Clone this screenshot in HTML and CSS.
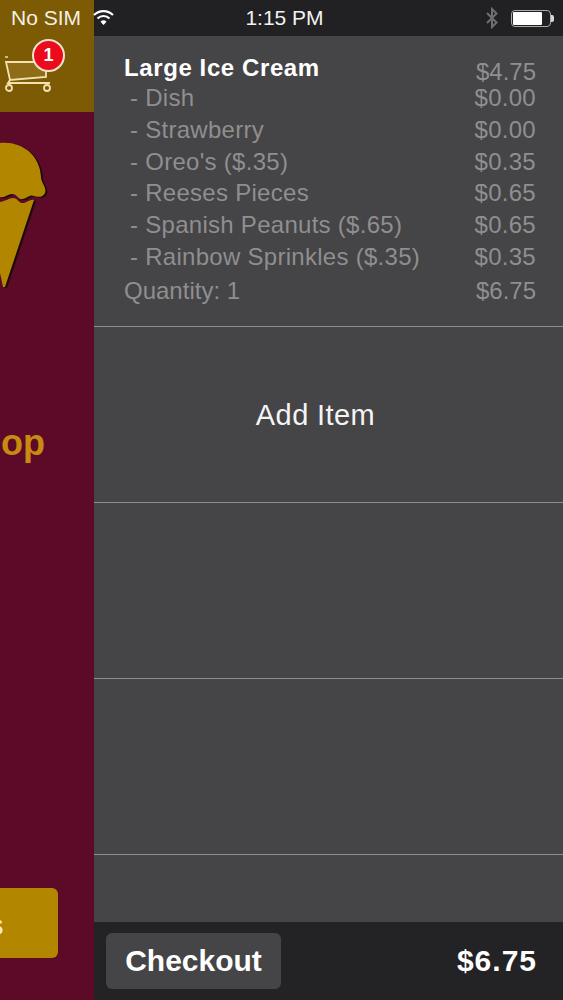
FILE: index.html
```html
<!DOCTYPE html>
<html lang="en">
<head>
  <meta charset="UTF-8">
  <meta name="viewport" content="width=device-width, initial-scale=1.0">
  <title>Cart</title>
  <link rel="stylesheet" href="styles.css">
</head>
<body>
  <div class="status-bar">
    <div class="status-left">
      <span>No SIM</span>
      <svg class="wifi" width="21" height="17" viewBox="0 0 21 17">
        <path d="M10.5 16 L7.5 12.7 A4.5 4.5 0 0 1 13.5 12.7 Z" fill="#fff"/>
        <path d="M4.5 9.5 A8.5 8.5 0 0 1 16.5 9.5" fill="none" stroke="#fff" stroke-width="2.2"/>
        <path d="M1 6 A13.5 13.5 0 0 1 20 6" fill="none" stroke="#fff" stroke-width="2.2"/>
      </svg>
    </div>
    <div class="status-time">1:15 PM</div>
    <div class="status-right">
      <svg width="14" height="22" viewBox="0 0 14 22">
        <path d="M2 6 L11.5 15.5 L7 20 L7 2 L11.5 6.5 L2 16" fill="none" stroke="#6f6e70" stroke-width="2"/>
      </svg>
      <div class="battery"><div class="battery-fill"></div></div>
      <div class="battery-tip"></div>
    </div>
  </div>

  <div class="app">
    <aside class="shop">
      <div class="shop-header">
        <svg class="cart-icon" width="46" height="38" viewBox="0 0 46 38">
          <path d="M0 1 H3" fill="none" stroke="#f3e2b0" stroke-width="1.4"/>
          <path d="M1 6 H32 L41 12 V21 L5 24 Z" fill="#8f6c16" stroke="#f3e2b0" stroke-width="1.8"/>
          <path d="M5 24 L3 27 H45" fill="none" stroke="#f3e2b0" stroke-width="1.8"/>
          <circle cx="4" cy="32" r="3" fill="none" stroke="#f3e2b0" stroke-width="1.8"/>
          <circle cx="42" cy="32" r="3" fill="none" stroke="#f3e2b0" stroke-width="1.8"/>
        </svg>
        <div class="badge">1</div>
      </div>
      <div class="shop-body">
        <svg class="cone" width="60" height="150" viewBox="0 0 60 150">
          <g class="cone-art">
            <path d="M0 2 C22 0 40 14 41 36 C41 42 47 46 45 52 C43 57 37 56 34 55 C30 53 27 57 23 58 C18 59 17 53 12 53 C8 53 5 57 0 56 Z" fill="#b38600"/>
            <path d="M0 61 C6 60 9 57 13 57 C18 57 19 63 24 62 C28 61 30 58 34 59 L5 146 L3 146 L0 132 Z" fill="#b38600"/>
          </g>
        </svg>
        <div class="shop-title">op</div>
        <div class="shop-button">s</div>
      </div>
    </aside>

    <main class="cart">
      <div class="row order-row">
        <div class="line line-title">
          <span class="item-name">Large Ice Cream</span>
          <span class="item-base">$4.75</span>
        </div>
        <div class="line line-option"><span>- Dish</span><span>$0.00</span></div>
        <div class="line line-option"><span>- Strawberry</span><span>$0.00</span></div>
        <div class="line line-option"><span>- Oreo's ($.35)</span><span>$0.35</span></div>
        <div class="line line-option"><span>- Reeses Pieces</span><span>$0.65</span></div>
        <div class="line line-option"><span>- Spanish Peanuts ($.65)</span><span>$0.65</span></div>
        <div class="line line-option"><span>- Rainbow Sprinkles ($.35)</span><span>$0.35</span></div>
        <div class="line line-qty"><span>Quantity: 1</span><span>$6.75</span></div>
      </div>
      <div class="row add-row">Add Item</div>
      <div class="row empty-row"></div>
      <div class="row empty-row"></div>
      <div class="row last-row"></div>
      <div class="cart-footer">
        <div class="checkout-btn">Checkout</div>
        <div class="total">$6.75</div>
      </div>
    </main>
  </div>
</body>
</html>
```

FILE: styles.css
```css
* {
  box-sizing: border-box;
}

body {
  margin: 0;
  height: 1000px;
  overflow: hidden;
  font-family: "Liberation Sans", Arial, sans-serif;
  background-color: #464547;
  position: relative;
}

.status-bar {
  position: absolute;
  z-index: 2;
  top: 0;
  left: 0;
  width: 100%;
  height: 36px;
  padding: 0 9px 0 11px;
  display: flex;
  justify-content: space-between;
  align-items: center;
  color: #f4f0e6;
  font-size: 21px;
}

.status-left {
  display: flex;
  align-items: center;
  gap: 12px;
  width: 170px;
}

.wifi {
  margin-top: -2px;
}

.status-time {
  color: #f2f2f2;
  margin-left: 4px;
}

.status-right {
  display: flex;
  align-items: center;
  justify-content: flex-end;
  width: 170px;
}

.battery {
  width: 40px;
  height: 17px;
  margin-left: 12px;
  padding: 1px;
  border: 1.5px solid #a9a9a9;
  border-radius: 4px;
}

.battery-fill {
  width: 29px;
  height: 100%;
  background-color: #fff;
  border-radius: 1px;
}

.battery-tip {
  width: 3px;
  height: 7px;
  background-color: #d8d8d8;
  border-radius: 0 2px 2px 0;
}

.app {
  display: flex;
  height: 1000px;
}

.shop {
  width: 94px;
  flex-shrink: 0;
  display: flex;
  flex-direction: column;
  background-color: #5c0a28;
  overflow: hidden;
}

.shop-header {
  height: 112px;
  flex-shrink: 0;
  background-color: #7d5a04;
  position: relative;
  padding: 56px 0 0 5px;
}

.cart-icon {
  display: block;
}

.badge {
  position: absolute;
  top: 39px;
  left: 32px;
  width: 33px;
  height: 33px;
  border: 2px solid #f0e4d0;
  border-radius: 50%;
  background-color: #ec0b1c;
  color: #fff;
  font-size: 18px;
  font-weight: bold;
  text-align: center;
  line-height: 28px;
}

.shop-body {
  flex: 1;
  display: flex;
  flex-direction: column;
}

.cone {
  display: block;
  margin-top: 29px;
}

.cone-art {
  filter: drop-shadow(2px 1px 0 #1c0a0c);
}

.shop-title {
  margin-top: 131px;
  width: 45px;
  display: flex;
  justify-content: flex-end;
  color: #c98a12;
  font-size: 36px;
  font-weight: bold;
  line-height: 41px;
}

.shop-button {
  margin-top: auto;
  margin-bottom: 42px;
  width: 58px;
  height: 70px;
  border-radius: 0 6px 6px 0;
  background-color: #b38600;
  color: #f4ead0;
  font-size: 30px;
  font-weight: bold;
  line-height: 74px;
  text-indent: -13px;
}

.cart {
  flex: 1;
  display: flex;
  flex-direction: column;
  background-color: #454446;
  border-top: 36px solid #212022;
}

.row {
  border-bottom: 1px solid #8d8c8e;
}

.order-row {
  height: 291px;
  padding: 17px 27px 0 30px;
}

.line {
  display: flex;
  justify-content: space-between;
  color: #8f8e90;
  font-size: 24px;
}

.line-title {
  height: 29px;
  align-items: flex-start;
}

.item-name {
  color: #fff;
  font-weight: bold;
  line-height: 30px;
  letter-spacing: 0.6px;
}

.item-base {
  margin-top: 5px;
}

.line-option {
  height: 31.8px;
  line-height: 32px;
  padding-left: 6px;
  letter-spacing: 0.28px;
}

.line-qty {
  margin-top: 2.5px;
  height: 32px;
  line-height: 32px;
}

.add-row {
  height: 176px;
  padding: 2px 26px 0 0;
  display: flex;
  justify-content: center;
  align-items: center;
  color: #f4f4f4;
  font-size: 29px;
  letter-spacing: 0.4px;
}

.empty-row {
  height: 176px;
}

.last-row {
  flex: 1;
  border-bottom: none;
}

.cart-footer {
  height: 78px;
  flex-shrink: 0;
  background-color: #232224;
  padding: 11px 27px 11px 12px;
  display: flex;
  justify-content: space-between;
  align-items: center;
  color: #fff;
  font-weight: bold;
  font-size: 30px;
}

.checkout-btn {
  width: 175px;
  height: 56px;
  border-radius: 6px;
  background-color: #454446;
  text-align: center;
  line-height: 56px;
}

.total {
  letter-spacing: 1px;
  margin-right: -1px;
}
```
